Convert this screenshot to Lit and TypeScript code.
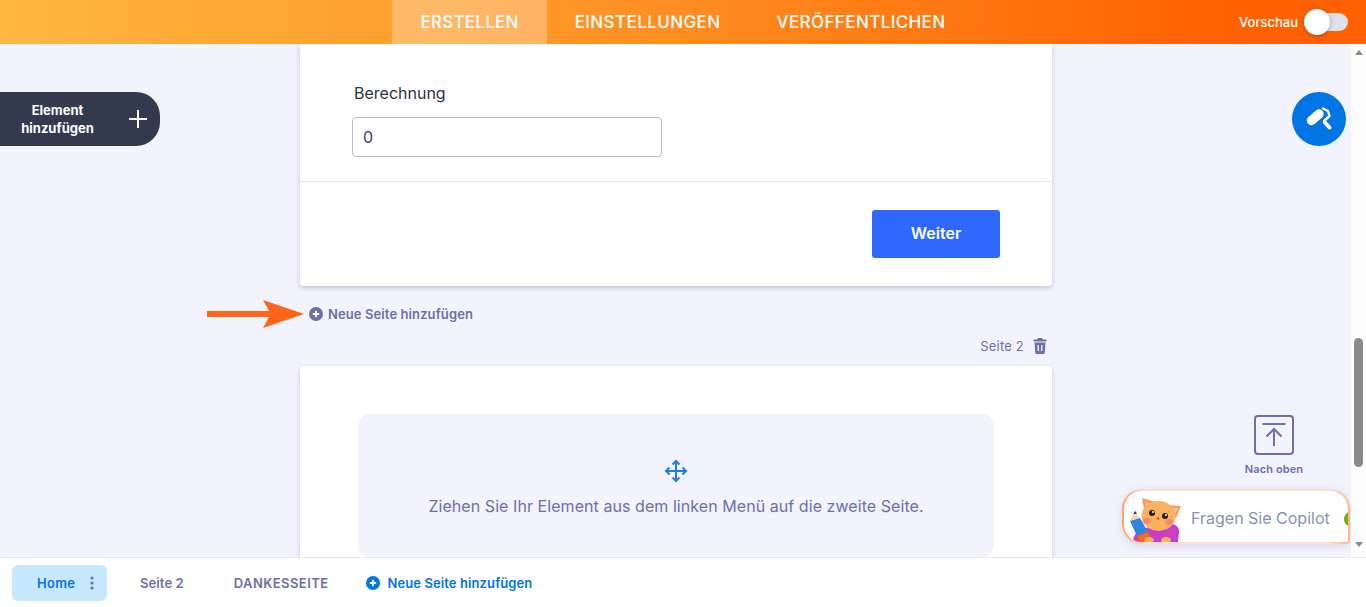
import { LitElement, html, css, svg } from 'lit';
import { customElement } from 'lit/decorators.js';

const plusCircle = svg`<circle cx="7" cy="7" r="7" fill="currentColor"></circle><path d="M7 3.8v6.4M3.8 7h6.4" stroke="#fff" stroke-width="1.8"></path>`;

@customElement('app-root')
export class AppRoot extends LitElement {
  static styles = css`
    :host {
      display: flex;
      flex-direction: column;
      height: 607px;
      overflow: hidden;
      font-family: Inter, "Liberation Sans", sans-serif;
      color: #6a70a8;
      background: #f3f3fe;
    }

    /* top bar */
    .top {
      height: 44px;
      flex: none;
      display: grid;
      grid-template-columns: 1fr auto 1fr;
      background: linear-gradient(90deg, #ffb73f 0%, #ff9224 45%, #ff6100 90%);
      color: #fff;
    }
    .tabs { grid-column: 2; display: flex; }
    .tab {
      padding: 0 28px;
      line-height: 44px;
      font-size: 17px;
      font-weight: 500;
      letter-spacing: 0.4px;
    }
    .tab.on { background: rgba(255, 255, 255, 0.28); letter-spacing: 0.25px; }
    .preview {
      grid-column: 3;
      display: flex;
      align-items: center;
      justify-content: flex-end;
      gap: 6px;
      padding-right: 18px;
      font-size: 13px;
      font-weight: 500;
    }
    .toggle {
      width: 44px;
      height: 18px;
      border-radius: 9px;
      background: #dfe0ea;
      position: relative;
    }
    .toggle i {
      position: absolute;
      left: 0;
      top: -4px;
      width: 26px;
      height: 26px;
      border-radius: 50%;
      background: #fff;
      box-shadow: 0 1px 4px rgba(0, 0, 0, 0.3);
    }

    /* middle */
    .middle { flex: 1; min-height: 0; display: flex; }
    .stage {
      flex: 1;
      min-width: 0;
      position: relative;
      overflow: hidden;
      padding-left: 300px;
    }
    .column { width: 752px; display: flex; flex-direction: column; }
    .card {
      background: #fff;
      border-radius: 0 0 4px 4px;
      box-shadow: 0 2px 5px rgba(70, 70, 130, 0.28);
      flex: none;
    }
    .field {
      padding: 39px 52px 24px;
      border-bottom: 1px solid #e6e6f2;
    }
    .label {
      font-size: 16px;
      line-height: 20px;
      color: #2c3345;
      padding-left: 2px;
      margin-bottom: 14px;
    }
    .input {
      width: 310px;
      height: 40px;
      box-sizing: border-box;
      border: 1px solid #b8b9cc;
      border-radius: 4px;
      padding: 0 10px;
      font-size: 16px;
      line-height: 38px;
      color: #3a4055;
    }
    .foot {
      display: flex;
      justify-content: flex-end;
      padding: 28px 52px;
    }
    .next {
      width: 128px;
      height: 48px;
      border-radius: 3px;
      background: #2f68ff;
      color: #fff;
      font-size: 16px;
      font-weight: 600;
      line-height: 46px;
      text-align: center;
    }
    .add {
      display: flex;
      align-items: center;
      gap: 5px;
      height: 20px;
      margin-top: 18px;
      padding-left: 9px;
      font-size: 13px;
      font-weight: 600;
      letter-spacing: 0.1px;
    }
    .pagehead {
      display: flex;
      align-items: center;
      justify-content: flex-end;
      gap: 9px;
      height: 20px;
      margin-top: 12px;
      padding-right: 5px;
      font-size: 13px;
      letter-spacing: 0.2px;
    }
    .page2 {
      margin-top: 10px;
      padding: 48px 58px;
      border-radius: 4px;
    }
    .drop {
      height: 143px;
      box-sizing: border-box;
      padding-top: 45px;
      border-radius: 12px;
      background: #f3f3fe;
      display: flex;
      flex-direction: column;
      align-items: center;
      gap: 11px;
      font-size: 16px;
      letter-spacing: 0.06px;
      line-height: 24px;
    }
    .drop svg { display: block; }

    /* things floating over the canvas */
    .element {
      position: absolute;
      left: 0;
      top: 48px;
      width: 160px;
      height: 54px;
      box-sizing: border-box;
      padding-right: 45px;
      border-radius: 0 24px 24px 0;
      background: #343a4e;
      color: #fff;
      display: flex;
      align-items: center;
      justify-content: center;
      text-align: center;
      font-size: 13px;
      font-weight: 700;
      line-height: 18px;
    }
    .element svg { position: absolute; left: 128px; top: 17px; }
    .arrow { position: absolute; left: 207px; top: 256px; }
    .roller {
      position: absolute;
      left: 1292px;
      top: 48px;
      width: 54px;
      height: 54px;
      border-radius: 50%;
      background: #0075e3;
    }
    .up {
      position: absolute;
      left: 1234px;
      top: 371px;
      width: 80px;
      display: flex;
      flex-direction: column;
      align-items: center;
      gap: 7px;
      font-size: 11px;
      font-weight: 600;
      letter-spacing: 0.1px;
      line-height: 14px;
    }
    .copilot {
      position: absolute;
      left: 1122px;
      top: 445px;
      width: 228px;
      height: 55px;
      box-sizing: border-box;
      border: 2px solid transparent;
      border-radius: 20px 20px 4px 20px;
      background:
        linear-gradient(#fff, #fff) padding-box,
        linear-gradient(90deg, #ffa268, #ffe0cf 10%, #ffe0cf 90%, #ffb48a) border-box;
      box-shadow: 0 2px 8px rgba(90, 80, 160, 0.18);
      overflow: hidden;
      display: flex;
      align-items: center;
      font-size: 16px;
      color: #8a8fb8;
    }
    .copilot svg { flex: none; align-self: flex-end; }
    .copilot span { margin: 2px 0 0 7px; }
    .copilot i {
      position: absolute;
      right: -18px;
      top: 19px;
      width: 22px;
      height: 18px;
      border-radius: 50%;
      background: #6ab015;
    }

    /* scrollbar */
    .scroll {
      width: 15px;
      flex: none;
      background: #fdfdfd;
      display: flex;
      flex-direction: column;
      align-items: center;
    }
    .tri { width: 0; height: 0; border: 4.5px solid transparent; }
    .tri.a { border-bottom: 5px solid #8a8a8a; border-top: 0; margin-top: 6px; }
    .tri.b { border-top: 5px solid #8a8a8a; border-bottom: 0; margin-top: 75px; }
    .thumb {
      width: 9px;
      height: 129px;
      margin-top: 283px;
      border-radius: 5px;
      background: #8a8a8a;
    }

    /* bottom bar */
    .bottom {
      height: 50px;
      flex: none;
      box-sizing: border-box;
      border-top: 1px solid #e8e8f2;
      background: #fff;
      display: flex;
      align-items: center;
      padding-left: 12px;
      font-size: 13px;
      font-weight: 600;
      letter-spacing: 0.1px;
    }
    .home {
      width: 95px;
      height: 36px;
      box-sizing: border-box;
      padding: 0 13px 0 25px;
      margin-right: 33px;
      border-radius: 6px;
      background: #c5e8ff;
      color: #0f6fde;
      letter-spacing: 0.35px;
      display: flex;
      align-items: center;
      justify-content: space-between;
    }
    .second { margin-right: 50px; }
    .thanks { margin-right: 38px; letter-spacing: 0.42px; }
    .newpage { display: flex; align-items: center; gap: 7px; color: #0075e3; }
  `;

  render() {
    return html`
      <div class="top">
        <div class="tabs">
          <div class="tab on">ERSTELLEN</div>
          <div class="tab">EINSTELLUNGEN</div>
          <div class="tab">VERÖFFENTLICHEN</div>
        </div>
        <div class="preview">Vorschau <div class="toggle"><i></i></div></div>
      </div>

      <div class="middle">
        <div class="stage">
          <div class="column">
            <div class="card">
              <div class="field">
                <div class="label">Berechnung</div>
                <div class="input">0</div>
              </div>
              <div class="foot"><div class="next">Weiter</div></div>
            </div>
            <div class="add">
              <svg width="14" height="14" viewBox="0 0 14 14">${plusCircle}</svg>
              Neue Seite hinzufügen
            </div>
            <div class="pagehead">
              Seite 2
              <svg width="14" height="16" viewBox="0 0 14 16" fill="currentColor">
                <path d="M5 0h4l1 1.500h3.500v2H.5v-2H4zM1.500 4.500h11l-.7 10a1.500 1.500 0 0 1-1.500 1.500H3.700a1.500 1.500 0 0 1-1.500-1.500z"></path>
                <path d="M5.200 7v6M8.800 7v6" stroke="#fff" stroke-width="1.200"></path>
              </svg>
            </div>
            <div class="card page2">
              <div class="drop">
                <svg width="24" height="24" viewBox="0 0 24 24" fill="none" stroke="#1f7fe0" stroke-width="2">
                  <path d="M12 2v20M2 12h20"></path>
                  <path d="M8.500 5.500 12 2l3.500 3.500M8.500 18.500 12 22l3.500-3.500M5.500 8.500 2 12l3.500 3.500M18.500 8.500 22 12l-3.500 3.500"></path>
                </svg>
                Ziehen Sie Ihr Element aus dem linken Menü auf die zweite Seite.
              </div>
            </div>
          </div>

          <div class="element">
            <div>Element<br />hinzufügen</div>
            <svg width="20" height="20" viewBox="0 0 20 20" stroke="#fff" stroke-width="2"><path d="M10 1v18M1 10h18"></path></svg>
          </div>

          <svg class="arrow" width="97" height="28" viewBox="0 0 97 28" fill="#ff6516">
            <path d="M0 11h62L56 0l41 14-41 14 6-11H0z"></path>
          </svg>

          <div class="roller">
            <svg width="54" height="54" viewBox="0 0 54 54" fill="none" stroke="#fff" stroke-linecap="round" stroke-linejoin="round">
              <path d="M19.500 28.500 27 22" stroke-width="9.500"></path>
              <path d="M31 16.500l5 2.500 1.500 5-5.500 5" stroke-width="2.400"></path>
              <path d="M33 30.500l4.500 5" stroke-width="4"></path>
            </svg>
          </div>

          <div class="up">
            <svg width="40" height="40" viewBox="0 0 40 40" fill="none" stroke="currentColor" stroke-width="2">
              <rect x="1" y="1" width="38" height="38" rx="3"></rect>
              <path d="M8.500 9h23M20 31V14M12.500 21.500 20 14l7.500 7.500"></path>
            </svg>
            Nach oben
          </div>

          <div class="copilot">
            <svg width="60" height="51" viewBox="0 0 60 51">
              <path d="M9 51c0-8 6-12 12-14l26-4c5 0 8 3 8 8l-1 10z" fill="#c93fc4"></path>
              <path d="M11 20l-5 10 10-3z" fill="#f2d6b8"></path>
              <path d="M11 20l-1.600 3.200 3.600-.8z" fill="#333"></path>
              <path d="M6 30l10-3 8 14-11 4z" fill="#2d86dc"></path>
              <path d="M13 45l11-4 4 10H16z" fill="#ff6a1a"></path>
              <path d="M18 7l17 5-14 11z" fill="#f5a055"></path>
              <path d="M57 15l-17-1 12 13z" fill="#f5a055"></path>
              <path d="M21 11l8 3-6 5z" fill="#ffb9b0"></path>
              <path d="M54 17l-8 0 5 6z" fill="#ffb9b0"></path>
              <ellipse cx="34.500" cy="25" rx="17" ry="15" fill="#fbb25e"></ellipse>
              <ellipse cx="23" cy="30" rx="4" ry="3" fill="#f98a6a"></ellipse>
              <ellipse cx="45" cy="31" rx="4" ry="3" fill="#f98a6a"></ellipse>
              <circle cx="28" cy="22" r="3" fill="#2a1a14"></circle>
              <circle cx="41" cy="25" r="3" fill="#2a1a14"></circle>
              <circle cx="29" cy="21" r="1" fill="#fff"></circle>
              <circle cx="42" cy="24" r="1" fill="#fff"></circle>
              <circle cx="34" cy="27.500" r="1.300" fill="#d8503c"></circle>
              <ellipse cx="25" cy="49" rx="5" ry="3" fill="#fbb25e"></ellipse>
              <ellipse cx="42" cy="49" rx="5" ry="3" fill="#fbb25e"></ellipse>
            </svg>
            <span>Fragen Sie Copilot</span>
            <i></i>
          </div>
        </div>

        <div class="scroll">
          <div class="tri a"></div>
          <div class="thumb"></div>
          <div class="tri b"></div>
        </div>
      </div>

      <div class="bottom">
        <div class="home">
          Home
          <svg width="4" height="14" viewBox="0 0 4 14" fill="#6a70a8">
            <circle cx="2" cy="2" r="1.600"></circle><circle cx="2" cy="7" r="1.600"></circle><circle cx="2" cy="12" r="1.600"></circle>
          </svg>
        </div>
        <div class="second">Seite 2</div>
        <div class="thanks">DANKESSEITE</div>
        <div class="newpage">
          <svg width="14" height="14" viewBox="0 0 14 14">${plusCircle}</svg>
          Neue Seite hinzufügen
        </div>
      </div>
    `;
  }
}
